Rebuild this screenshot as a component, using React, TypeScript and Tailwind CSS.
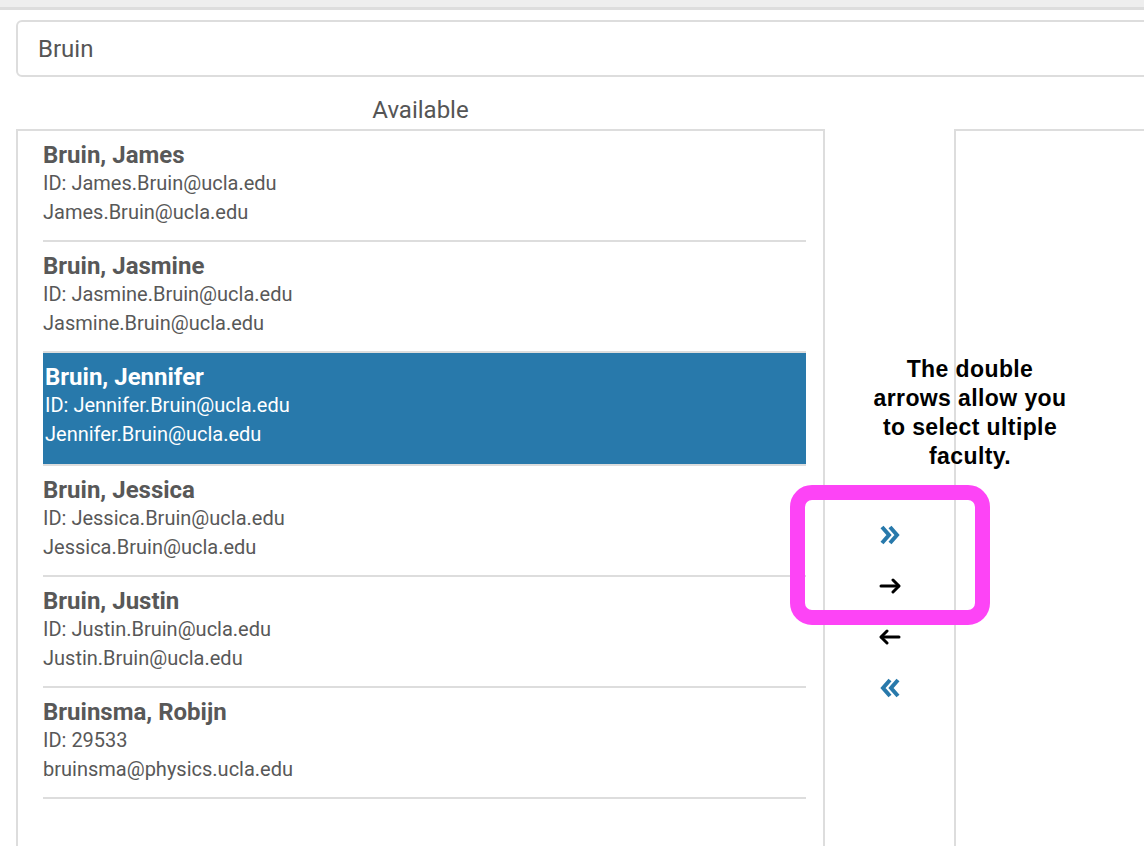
type Person = {
  name: string;
  id: string;
  email: string;
};

const people: Person[] = [
  { name: "Bruin, James", id: "James.Bruin@ucla.edu", email: "James.Bruin@ucla.edu" },
  { name: "Bruin, Jasmine", id: "Jasmine.Bruin@ucla.edu", email: "Jasmine.Bruin@ucla.edu" },
  { name: "Bruin, Jennifer", id: "Jennifer.Bruin@ucla.edu", email: "Jennifer.Bruin@ucla.edu" },
  { name: "Bruin, Jessica", id: "Jessica.Bruin@ucla.edu", email: "Jessica.Bruin@ucla.edu" },
  { name: "Bruin, Justin", id: "Justin.Bruin@ucla.edu", email: "Justin.Bruin@ucla.edu" },
  { name: "Bruinsma, Robijn", id: "29533", email: "bruinsma@physics.ucla.edu" },
];

const selected = "Bruin, Jennifer";

const DoubleChevron = ({ left = false }: { left?: boolean }) => (
  <svg
    width="22"
    height="22"
    viewBox="0 0 22 22"
    fill="none"
    stroke="currentColor"
    strokeWidth="4"
    strokeLinejoin="miter"
    className={left ? "-scale-x-100" : ""}
  >
    <polyline points="3,3 10,11 3,19" />
    <polyline points="11,3 18,11 11,19" />
  </svg>
);

const Arrow = ({ left = false }: { left?: boolean }) => (
  <svg
    width="22"
    height="16"
    viewBox="0 0 22 16"
    fill="none"
    stroke="currentColor"
    strokeWidth="3"
    strokeLinecap="round"
    strokeLinejoin="round"
    className={left ? "-scale-x-100" : ""}
  >
    <line x1="2" y1="8" x2="19.5" y2="8" />
    <polyline points="14,2 20,8 14,14" />
  </svg>
);

const PersonRow = ({ p }: { p: Person }) => {
  const active = p.name === selected;
  return (
    <li
      className={
        active
          ? "border-b-2 border-[#dddddd] bg-[#2879ab] pl-[2px] pt-[10px] pb-[15px] text-white"
          : "border-b-2 border-[#dddddd] pt-[10px] pb-[13px] text-[#585858]"
      }
    >
      <div className="text-[24px] font-bold leading-[29px]">{p.name}</div>
      <div className="text-[20px] leading-[27px]">ID: {p.id}</div>
      <div className="text-[20px] leading-[30px]">{p.email}</div>
    </li>
  );
};

export default function App() {
  return (
    <div className="relative h-[846px] w-[1144px] overflow-hidden bg-white font-['Roboto',sans-serif]">
      <div className="h-[7px] bg-[#eeeeee]" />
      <div className="h-[3px] bg-[#dddddd]" />

      <div className="pl-4 pt-[10px]">
        <div className="flex h-[57px] w-[1160px] items-center rounded-[6px] border-2 border-[#dddddd] pl-[20px] text-[24px] text-[#555555]">
          Bruin
        </div>
      </div>

      <div className="mt-[18px] flex pl-4">
        <div className="w-[809px]">
          <div className="h-[30px] text-center text-[24px] leading-[30px] text-[#555555]">
            Available
          </div>
          <div className="mt-[4px] h-[800px] border-2 border-[#dddddd] pl-[25px] pr-[17px]">
            <ul>
              {people.map((p) => (
                <PersonRow key={p.name} p={p} />
              ))}
            </ul>
          </div>
        </div>

        <div className="flex w-[129px] flex-col items-center pt-[414px]">
          <button className="flex h-[51px] items-center text-[#2879ab]">
            <DoubleChevron />
          </button>
          <button className="flex h-[51px] items-center text-black">
            <Arrow />
          </button>
          <button className="flex h-[51px] items-center text-black">
            <Arrow left />
          </button>
          <button className="flex h-[51px] items-center text-[#2879ab]">
            <DoubleChevron left />
          </button>
        </div>

        <div className="flex-1 pt-[34px]">
          <div className="h-[800px] border-l-2 border-t-2 border-[#dddddd]" />
        </div>
      </div>

      {/* callout over the transfer buttons */}
      <div className="absolute left-[850px] top-[355px] w-[240px] text-center font-['Liberation_Sans',sans-serif] text-[23px] font-bold leading-[29px] tracking-[0.4px] text-black">
        The double
        <br />
        arrows allow you
        <br />
        to select ultiple
        <br />
        faculty.
      </div>
      <div className="absolute left-[790px] top-[485px] h-[140px] w-[200px] rounded-[22px] border-[15px] border-[#fd44f6]" />
    </div>
  );
}
